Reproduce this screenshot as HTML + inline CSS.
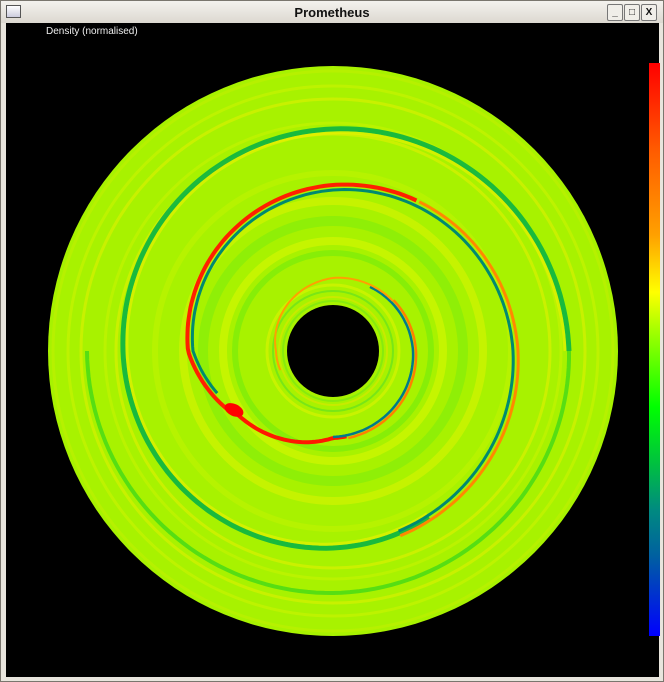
<!DOCTYPE html>
<html><head><style>
body{margin:0;width:664px;height:682px;background:#d6d2c9;overflow:hidden;font-family:"Liberation Sans",sans-serif}
.win{position:absolute;left:0;top:0;width:662px;height:680px;border:1px solid #7a766e;background:#e8e5dd}
.title{position:absolute;left:0;top:0;width:662px;height:22px;background:linear-gradient(#f4f2ee,#dcd8d0);text-align:center;font-weight:bold;font-size:13px;line-height:23px;color:#111}
.ic{position:absolute;left:5px;top:4px;width:13px;height:11px;border:1px solid #555;background:linear-gradient(#fff,#ccd)}
.btn{position:absolute;top:3px;width:14px;height:15px;border:1px solid #777;border-radius:2px;background:#f0eee9;font-size:10px;line-height:15px;text-align:center;font-weight:bold}
.area{position:absolute;left:5px;top:22px;width:653px;height:654px;background:#000}
.lbl{position:absolute;left:40px;top:3px;color:#eee;font-size:10px}
.cb{position:absolute;left:643px;top:40px;width:11px;height:573px;background:linear-gradient(#ff0000 0%,#ff5a00 15%,#ffa000 30%,#ffff00 40%,#a0ff00 47%,#00ff00 60%,#00c040 70%,#008a80 78%,#0060a0 86%,#0000ff 100%)}
</style></head><body>
<div class="win">
<div class="title">Prometheus<div class="ic"></div>
<div class="btn" style="left:606px">_</div><div class="btn" style="left:623px">□</div><div class="btn" style="left:640px">X</div></div>
<div class="area"><div class="lbl">Density (normalised)</div><div class="cb"></div>
<svg id="s" width="653" height="654" style="position:absolute;left:0;top:0"></svg>
</div></div>
<script>
var cx=327,cy=328,s=document.getElementById('s'),h='';
h+='<circle cx="'+cx+'" cy="'+cy+'" r="285" fill="#a8f200"/>';
var rings=[[280,'#c8f000',3],[265,'#d8f400',3],[252,'#f0f000',3],[228,'#d0f400',3],[217,'#f4f000',3],[178,'#c8f400',6],[150,'#e8f400',8],[130,'#70ea10',10],[110,'#e8f800',8],[98,'#60e810',6],[66,'#f0f400',3],[60,'#40d830',2],[54,'#f0e000',2],[50,'#60e020',2]];
rings.forEach(function(r){h+='<circle cx="'+cx+'" cy="'+cy+'" r="'+r[0]+'" fill="none" stroke="'+r[1]+'" stroke-width="'+r[2]+'" opacity="0.45"/>';});
function interp(pts,a){for(var i=0;i<pts.length-1;i++){var p=pts[i],q=pts[i+1];if((a-p[0])*(a-q[0])<=0){return p[1]+(q[1]-p[1])*(a-p[0])/(q[0]-p[0]);}}return pts[pts.length-1][1];}
function path(pts,a0,a1,off){var d='';var st=(a1>a0?2:-2);for(var a=a0;(st>0?a<=a1:a>=a1);a+=st){var r=interp(pts,a)+off,t=a*Math.PI/180;d+=(d?'L':'M')+(cx+r*Math.cos(t)).toFixed(1)+' '+(cy+r*Math.sin(t)).toFixed(1);}return d;}
var outer=[[149,116],[180,142],[270,163],[360,182],[450,197],[540,210],[630,222],[720,236],[810,242],[900,246]];
var inner=[[149,116],[90,87],[0,81],[-90,72],[-180,56],[-270,52]];
h+='<path d="'+path(outer,420,720,0)+'" fill="none" stroke="#00b048" stroke-width="5" opacity="0.85"/>';
h+='<path d="'+path(outer,420,720,-4)+'" fill="none" stroke="#f0f000" stroke-width="3" opacity="0.6"/>';
h+='<path d="'+path(outer,720,900,0)+'" fill="none" stroke="#20d020" stroke-width="4" opacity="0.6"/>';
h+='<path d="'+path(outer,149,300,3)+'" fill="none" stroke="#ff2000" stroke-width="4"/>';
h+='<path d="'+path(outer,300,430,3)+'" fill="none" stroke="#ff8800" stroke-width="3"/>';
h+='<path d="'+path(outer,160,430,-2)+'" fill="none" stroke="#008a70" stroke-width="3"/>';
h+='<path d="'+path(inner,149,80,0)+'" fill="none" stroke="#ff1800" stroke-width="4"/>';
h+='<path d="'+path(inner,80,-40,2)+'" fill="none" stroke="#ff8000" stroke-width="2.5"/>';
h+='<path d="'+path(inner,90,-60,-1)+'" fill="none" stroke="#007a8a" stroke-width="2.5"/>';
h+='<path d="'+path(inner,-40,-200,1)+'" fill="none" stroke="#ffa000" stroke-width="2"/>';
h+='<ellipse cx="228" cy="387" rx="10" ry="6" fill="#ff0000" transform="rotate(25 228 387)"/>';
h+='<circle cx="'+cx+'" cy="'+cy+'" r="46" fill="#000"/>';
s.innerHTML=h;
</script>
</body></html>
